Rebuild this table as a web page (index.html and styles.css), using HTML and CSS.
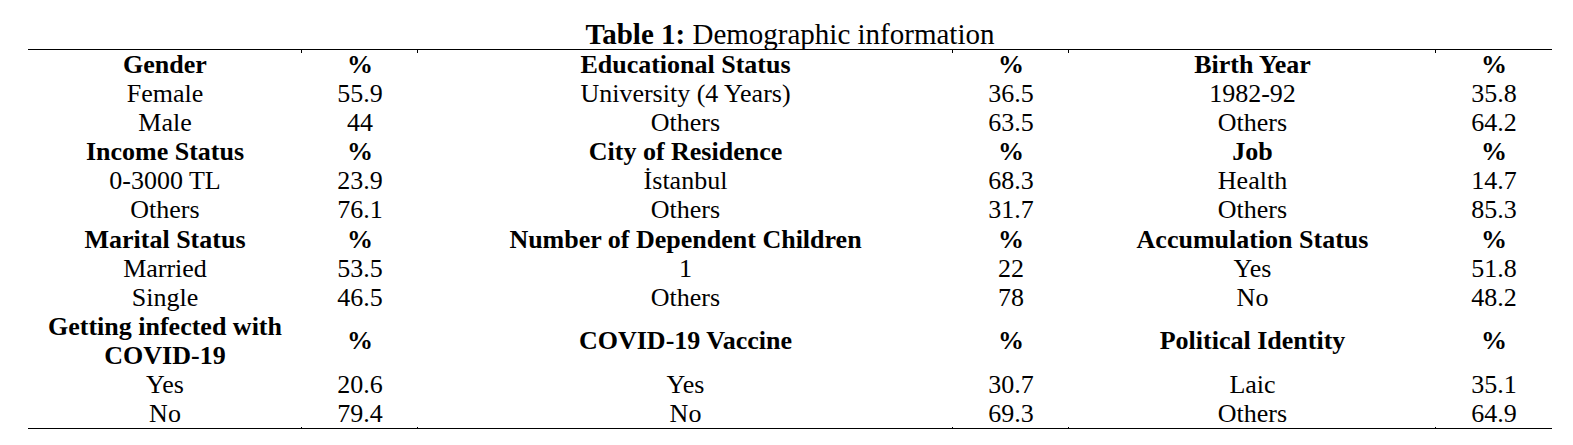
FILE: index.html
```html
<!DOCTYPE html>
<html lang="en">
<head>
<meta charset="utf-8">
<title>Table 1: Demographic information</title>
<link rel="stylesheet" href="styles.css">
</head>
<body>
<div class="doc">
  <div class="caption"><b>Table 1:</b> Demographic information</div>
  <table class="demo">
    <colgroup>
      <col class="c1"><col class="c2"><col class="c3"><col class="c4"><col class="c5"><col class="c6">
    </colgroup>
    <tbody>
      <tr class="head first">
        <td>Gender</td><td>%</td><td>Educational Status</td><td>%</td><td>Birth Year</td><td>%</td>
      </tr>
      <tr><td>Female</td><td>55.9</td><td>University (4 Years)</td><td>36.5</td><td>1982-92</td><td>35.8</td></tr>
      <tr><td>Male</td><td>44</td><td>Others</td><td>63.5</td><td>Others</td><td>64.2</td></tr>
      <tr class="head">
        <td>Income Status</td><td>%</td><td>City of Residence</td><td>%</td><td>Job</td><td>%</td>
      </tr>
      <tr><td>0-3000 TL</td><td>23.9</td><td>İstanbul</td><td>68.3</td><td>Health</td><td>14.7</td></tr>
      <tr><td>Others</td><td>76.1</td><td>Others</td><td>31.7</td><td>Others</td><td>85.3</td></tr>
      <tr class="head">
        <td>Marital Status</td><td>%</td><td>Number of Dependent Children</td><td>%</td><td>Accumulation Status</td><td>%</td>
      </tr>
      <tr><td>Married</td><td>53.5</td><td>1</td><td>22</td><td>Yes</td><td>51.8</td></tr>
      <tr><td>Single</td><td>46.5</td><td>Others</td><td>78</td><td>No</td><td>48.2</td></tr>
      <tr class="head">
        <td>Getting infected with COVID-19</td><td>%</td><td>COVID-19 Vaccine</td><td>%</td><td>Political Identity</td><td>%</td>
      </tr>
      <tr><td>Yes</td><td>20.6</td><td>Yes</td><td>30.7</td><td>Laic</td><td>35.1</td></tr>
      <tr class="last"><td>No</td><td>79.4</td><td>No</td><td>69.3</td><td>Others</td><td>64.9</td></tr>
    </tbody>
  </table>
</div>
</body>
</html>
```

FILE: styles.css
```css
html, body {
  margin: 0;
  padding: 0;
  background: #ffffff;
}

body {
  font-family: "Liberation Serif", "Times New Roman", serif;
  color: #000000;
}

.doc {
  width: 1524px;
  margin-left: 28px;
}

.caption {
  text-align: center;
  font-size: 29px;
  line-height: 29.5px;
  padding-top: 19.5px;
  white-space: nowrap;
}

.caption b {
  font-weight: 700;
}

.demo {
  width: 1524px;
  border-collapse: collapse;
  table-layout: fixed;
  font-size: 26px;
  line-height: 29.1px;
}

.c1 { width: 274px; }
.c2 { width: 116px; }
.c3 { width: 535px; }
.c4 { width: 116px; }
.c5 { width: 367px; }
.c6 { width: 116px; }

.demo td {
  padding: 0;
  text-align: center;
  vertical-align: middle;
  position: relative;
}

.demo tr.head td {
  font-weight: 700;
}

.demo tr.first td {
  border-top: 1px solid #000000;
}

.demo tr.last td {
  border-bottom: 1px solid #000000;
}

.demo tr.first td + td::before,
.demo tr.last td + td::after {
  content: "";
  position: absolute;
  left: -1px;
  width: 1px;
  height: 3px;
  background: #000000;
}

.demo tr.first td + td::before {
  top: 0;
}

.demo tr.last td + td::after {
  bottom: -2px;
}
```
